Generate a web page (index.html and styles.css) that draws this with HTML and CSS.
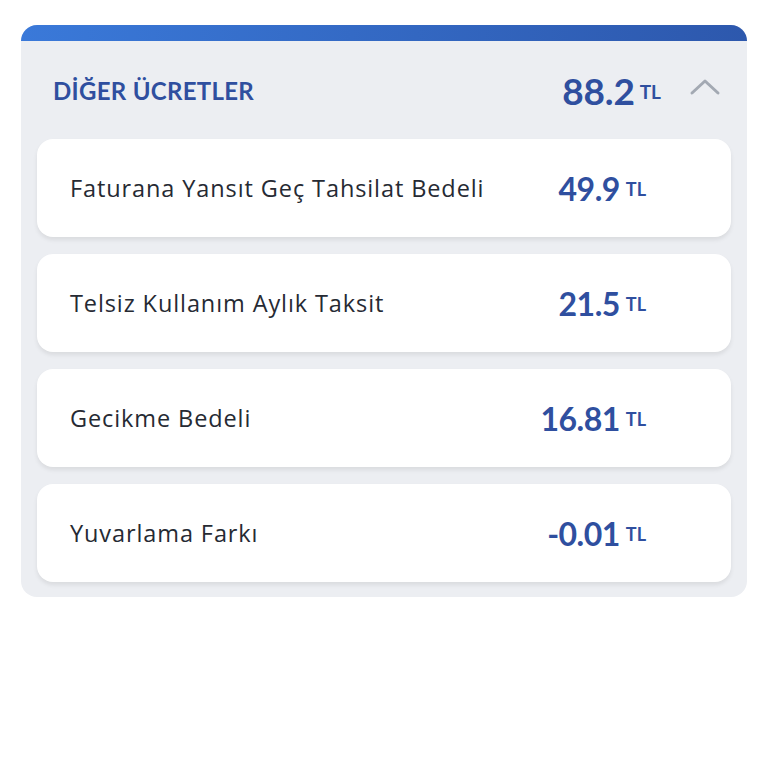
FILE: index.html
```html
<!DOCTYPE html>
<html lang="tr">
<head>
    <meta charset="UTF-8">
    <meta name="viewport" content="width=device-width, initial-scale=1.0">
    <title>Diğer Ücretler</title>
    <link rel="stylesheet" href="styles.css">
</head>
<body>
    <div class="fee-card">
        <div class="fee-card-bar"></div>
        <div class="fee-header">
            <h2 class="fee-title">DİĞER ÜCRETLER</h2>
            <div class="fee-total">
                <span class="amount">88.2</span><span class="currency">TL</span>
            </div>
            <svg class="chevron" width="32" height="18" viewBox="0 0 32 18">
                <polyline points="3,15 16,3 29,15" fill="none" stroke="#a3a9b3" stroke-width="3" stroke-linecap="round" stroke-linejoin="round"/>
            </svg>
        </div>
        <div class="fee-list">
            <div class="fee-item">
                <span class="fee-label">Faturana Yansıt Geç Tahsilat Bedeli</span>
                <span class="fee-value"><span class="amount">49.9</span><span class="currency">TL</span></span>
            </div>
            <div class="fee-item">
                <span class="fee-label">Telsiz Kullanım Aylık Taksit</span>
                <span class="fee-value"><span class="amount">21.5</span><span class="currency">TL</span></span>
            </div>
            <div class="fee-item">
                <span class="fee-label">Gecikme Bedeli</span>
                <span class="fee-value"><span class="amount">16.81</span><span class="currency">TL</span></span>
            </div>
            <div class="fee-item">
                <span class="fee-label">Yuvarlama Farkı</span>
                <span class="fee-value"><span class="amount">-0.01</span><span class="currency">TL</span></span>
            </div>
        </div>
    </div>
</body>
</html>
```
FILE: styles.css
```css
body {
    margin: 0;
    padding: 25px 21px;
    background: #fff;
    font-family: Lato, "Noto Sans", sans-serif;
}
.fee-card {
    background: #eceef2;
    border-radius: 16px;
    overflow: hidden;
    padding-bottom: 15px;
}
.fee-card-bar {
    height: 16px;
    background: linear-gradient(90deg, #3a79d9, #2d58ad);
}
.fee-header {
    display: flex;
    align-items: center;
    height: 98px;
    padding: 0 26px 0 32px;
}
.fee-title {
    flex: 1;
    margin: 0;
    font-size: 24px;
    font-weight: 700;
    color: #2f4f9f;
    letter-spacing: 0.3px;
}
.fee-total {
    display: flex;
    align-items: center;
    color: #2f4f9f;
    font-weight: 700;
}
.fee-total .amount {
    font-size: 37px;
    letter-spacing: -0.2px;
}
.fee-total .currency {
    font-size: 19px;
    margin-left: 5px;
    margin-top: 2px;
}
.chevron {
    margin-left: 28px;
    margin-top: -6px;
}
.fee-list {
    display: flex;
    flex-direction: column;
    gap: 17px;
    padding: 0 16px;
}
.fee-item {
    display: flex;
    align-items: center;
    justify-content: space-between;
    height: 98px;
    padding: 0 85px 0 33px;
    background: #fff;
    border-radius: 16px;
    box-shadow: 0 3px 4px rgba(0, 0, 0, 0.08);
}
.fee-label {
    font-family: "Open Sans", Lato, sans-serif;
    font-size: 23.5px;
    letter-spacing: 0.9px;
    color: #262a33;
}
.fee-value {
    display: flex;
    align-items: center;
    color: #2f4f9f;
    font-weight: 700;
}
.fee-value .amount {
    font-size: 32px;
    letter-spacing: -0.5px;
}
.fee-value .currency {
    font-size: 18px;
    margin-left: 6px;
    margin-top: 2px;
}
```
